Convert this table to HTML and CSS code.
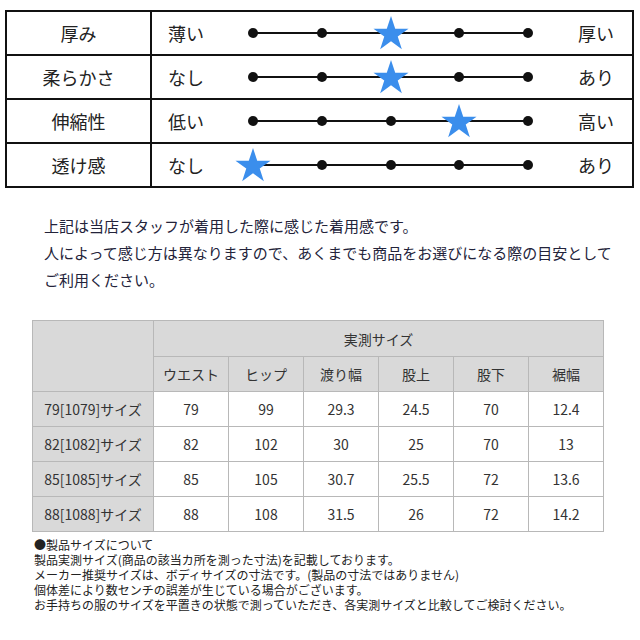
FILE: index.html
```html
<!DOCTYPE html>
<html lang="ja">
<head>
<meta charset="utf-8">
<link rel="stylesheet" href="styles.css">
</head>
<body>
<svg class="defs" width="0" height="0" aria-hidden="true">
  <defs>
    <symbol id="star" viewBox="0 0 100 95">
      <polygon points="50,0 61.8,35.3 99,35.3 68.8,57.1 80.3,92.7 50,70.7 19.7,92.7 31.2,57.1 1,35.3 38.2,35.3" fill="#3b8eec"/>
    </symbol>
  </defs>
</svg>

<div class="scale">
  <div class="srow">
    <div class="slabel">厚み</div>
    <div class="scell">
      <span class="lo">薄い</span>
      <div class="track">
        <span class="dot"></span><span class="dot"></span>
        <span class="mark"><svg class="star"><use href="#star"/></svg></span>
        <span class="dot"></span><span class="dot"></span>
      </div>
      <span class="hi">厚い</span>
    </div>
  </div>
  <div class="srow">
    <div class="slabel">柔らかさ</div>
    <div class="scell">
      <span class="lo">なし</span>
      <div class="track">
        <span class="dot"></span><span class="dot"></span>
        <span class="mark"><svg class="star"><use href="#star"/></svg></span>
        <span class="dot"></span><span class="dot"></span>
      </div>
      <span class="hi">あり</span>
    </div>
  </div>
  <div class="srow">
    <div class="slabel">伸縮性</div>
    <div class="scell">
      <span class="lo">低い</span>
      <div class="track">
        <span class="dot"></span><span class="dot"></span><span class="dot"></span>
        <span class="mark"><svg class="star"><use href="#star"/></svg></span>
        <span class="dot"></span>
      </div>
      <span class="hi">高い</span>
    </div>
  </div>
  <div class="srow">
    <div class="slabel">透け感</div>
    <div class="scell">
      <span class="lo">なし</span>
      <div class="track">
        <span class="mark"><svg class="star"><use href="#star"/></svg></span>
        <span class="dot"></span><span class="dot"></span><span class="dot"></span><span class="dot"></span>
      </div>
      <span class="hi">あり</span>
    </div>
  </div>
</div>

<p class="intro">上記は当店スタッフが着用した際に感じた着用感です。<br>人によって感じ方は異なりますので、あくまでも商品をお選びになる際の目安として<br>ご利用ください。</p>

<table class="size">
  <colgroup>
    <col class="c-first"><col class="c"><col class="c"><col class="c"><col class="c"><col class="c"><col class="c">
  </colgroup>
  <thead>
    <tr class="h1"><th rowspan="2" class="corner"></th><th colspan="6">実測サイズ</th></tr>
    <tr class="h2"><th>ウエスト</th><th>ヒップ</th><th>渡り幅</th><th>股上</th><th>股下</th><th>裾幅</th></tr>
  </thead>
  <tbody>
    <tr><th>79[1079]サイズ</th><td>79</td><td>99</td><td>29.3</td><td>24.5</td><td>70</td><td>12.4</td></tr>
    <tr><th>82[1082]サイズ</th><td>82</td><td>102</td><td>30</td><td>25</td><td>70</td><td>13</td></tr>
    <tr><th>85[1085]サイズ</th><td>85</td><td>105</td><td>30.7</td><td>25.5</td><td>72</td><td>13.6</td></tr>
    <tr><th>88[1088]サイズ</th><td>88</td><td>108</td><td>31.5</td><td>26</td><td>72</td><td>14.2</td></tr>
  </tbody>
</table>

<div class="notes">
  <p>●製品サイズについて</p>
  <p>製品実測サイズ(商品の該当カ所を測った寸法)を記載しております。</p>
  <p>メーカー推奨サイズは、ボディサイズの寸法です。(製品の寸法ではありません)</p>
  <p>個体差により数センチの誤差が生じている場合がございます。</p>
  <p>お手持ちの服のサイズを平置きの状態で測っていただき、各実測サイズと比較してご検討ください。</p>
</div>
</body>
</html>
```

FILE: styles.css
```css
html, body {
  margin: 0;
  padding: 0;
  background: #ffffff;
}
body {
  width: 640px;
  height: 640px;
  overflow: hidden;
  font-family: "Noto Sans CJK JP", "Noto Sans", sans-serif;
  color: #222;
}
.defs {
  display: block;
  width: 0;
  height: 0;
}

/* feel scale */
.scale {
  margin: 10px 0 0 5px;
  width: 625px;
  border: 2px solid #111;
}
.srow {
  display: flex;
  height: 42px;
  border-top: 2px solid #111;
}
.srow:first-child {
  border-top: none;
}
.slabel {
  width: 143px;
  flex-shrink: 0;
  border-right: 2px solid #111;
  display: flex;
  align-items: center;
  justify-content: center;
  font-size: 18px;
  color: #222;
}
.scell {
  display: flex;
  align-items: center;
  font-size: 18px;
  color: #222;
}
.lo {
  width: 96px;
  padding-left: 16px;
  box-sizing: border-box;
}
.track {
  width: 285px;
  height: 40px;
  display: flex;
  justify-content: space-between;
  align-items: center;
  background: linear-gradient(#111, #111) center / calc(100% - 10px) 2px no-repeat;
}
.dot {
  width: 10px;
  height: 10px;
  border-radius: 50%;
  background: #111;
}
.mark {
  width: 10px;
  height: 10px;
  display: flex;
  justify-content: center;
  align-items: center;
}
.star {
  width: 36px;
  height: 34px;
  flex-shrink: 0;
}
.hi {
  margin-left: 45px;
}

/* intro */
.intro {
  margin: 24px 0 0 44px;
  font-size: 15px;
  line-height: 27px;
  color: #23233a;
}

/* size table */
.size {
  margin: 27px 0 0 32px;
  border-collapse: collapse;
  table-layout: fixed;
  width: 571px;
  font-size: 14px;
  color: #333;
}
.c-first { width: 121px; }
.c { width: 75px; }
.size th, .size td {
  border: 1px solid #b8b8b8;
  text-align: center;
  font-weight: normal;
  padding: 0;
  height: 34px;
}
.size thead th {
  background: #d9d9d9;
}
.size tbody th {
  background: #d9d9d9;
}
.size tbody td {
  background: #fff;
}
.size .h1 th {
  height: 35px;
}

/* notes */
.notes {
  margin: 5px 0 0 34px;
  font-size: 12px;
  line-height: 15px;
  color: #222;
}
.notes p {
  margin: 0;
}
```
